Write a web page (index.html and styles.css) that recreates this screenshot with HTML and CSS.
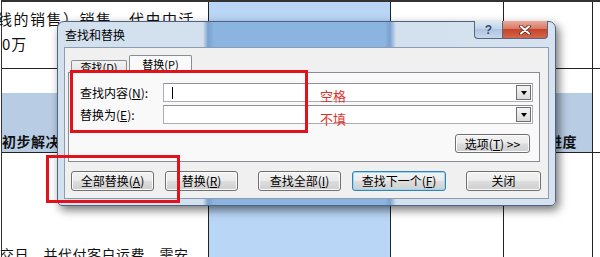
FILE: index.html
```html
<!DOCTYPE html>
<html lang="zh-CN">
<head>
    <meta charset="UTF-8">
    <title>查找和替换</title>
    <link rel="stylesheet" href="styles.css">
</head>
<body>

<div class="sheet">
    <div class="cell a1">
        <p class="line1">线的销售）销售，代由中活</p>
        <p class="line2">0万</p>
    </div>
    <div class="cell sel"></div>
    <div class="cell"></div>
    <div class="cell"></div>
    <div class="cell last"></div>

    <div class="cell flat"></div>
    <div class="cell flat sel"></div>
    <div class="cell flat"></div>
    <div class="cell flat"></div>
    <div class="cell flat last"></div>

    <div class="cell head"><b>初步解决</b></div>
    <div class="cell head sel"></div>
    <div class="cell head"></div>
    <div class="cell head right-txt"><b>进度</b></div>
    <div class="cell last"></div>

    <div class="cell foot"><p>交日，并代付客户运费，需安</p></div>
    <div class="cell foot sel"></div>
    <div class="cell foot"></div>
    <div class="cell foot"></div>
    <div class="cell foot last"></div>
</div>

<div class="dlg">
    <div class="titlebar">
        <span class="title">查找和替换</span>
        <div class="caps">
            <div class="cap help">?</div>
            <div class="cap close">
                <svg width="12" height="10" viewBox="0 0 12 10">
                    <path d="M2 1.5 L10 8.5 M10 1.5 L2 8.5" stroke="#5a1a10" stroke-width="3.6" stroke-linecap="round"/>
                    <path d="M2 1.5 L10 8.5 M10 1.5 L2 8.5" stroke="#fff" stroke-width="2.2" stroke-linecap="round"/>
                </svg>
            </div>
        </div>
    </div>

    <div class="client">
        <div class="tabs">
            <div class="tab">查找(<u>D</u>)</div>
            <div class="tab on">替换(<u>P</u>)</div>
        </div>
        <div class="pane">
            <div class="row">
                <label>查找内容(<u>N</u>):</label>
                <div class="combo"><span class="caret"></span><span class="drop"></span></div>
            </div>
            <div class="row">
                <label>替换为(<u>E</u>):</label>
                <div class="combo"><span class="drop"></span></div>
            </div>
            <div class="opt-row">
                <button class="btn opt">选项(<u>T</u>) &gt;&gt;</button>
            </div>
        </div>
        <div class="btn-row">
            <button class="btn w83">全部替换(<u>A</u>)</button>
            <button class="btn w73 g11">替换(<u>R</u>)</button>
            <button class="btn w83 g20">查找全部(<u>I</u>)</button>
            <button class="btn w94 g11 focus">查找下一个(<u>F</u>)</button>
            <button class="btn w75 g20">关闭</button>
        </div>
    </div>
</div>

<div class="mark mark-input"></div>
<div class="mark mark-btn"></div>
<div class="note note1">空格</div>
<div class="note note2">不填</div>

</body>
</html>
```

FILE: styles.css
```css
body {
    margin: 0;
    width: 600px;
    height: 257px;
    overflow: hidden;
    position: relative;
    background: #fff;
    font-family: "Noto Sans CJK SC", "Liberation Sans", sans-serif;
    color: #111;
}

/* spreadsheet behind the dialog */
.sheet {
    display: grid;
    grid-template-columns: 207px 182px 113px 89px 1fr;
    grid-template-rows: 67px 24px 60px 1fr;
    height: 257px;
    margin-left: 1px;
    border-top: 2px solid #333;
    border-left: 1px solid #333;
    box-sizing: border-box;
}

.cell {
    border-right: 1px solid #222;
    border-bottom: 1px solid #222;
    box-sizing: border-box;
    min-width: 0;
    font-size: 14px;
    line-height: 16px;
    white-space: nowrap;
}
.cell p {
    margin: 0;
}
.cell.last {
    border-right: none;
}
.cell.flat {
    border-bottom: none;
}
.cell.foot {
    border-bottom: none;
}
.sel {
    background: #b9d6f6;
}
.head {
    background: #b8cce4;
    padding-top: 40px;
    letter-spacing: 0.5px;
}
.head.sel {
    background: #9fb9dc;
}
.right-txt {
    padding-left: 44px;
}

.a1 {
    padding-top: 4px;
    font-size: 15px;
    line-height: 25px;
}
.line1 {
    margin-left: -5px !important;
    letter-spacing: 1.5px;
}
.line2 {
    letter-spacing: 1px;
}

.foot p {
    padding-top: 93px;
    margin-left: -2px;
    letter-spacing: 0.5px;
}

/* dialog window */
.dlg {
    position: absolute;
    left: 57px;
    top: 21px;
    width: 499px;
    height: 185px;
    box-sizing: border-box;
    border: 1px solid #4d6482;
    border-radius: 7px 7px 5px 5px;
    padding: 0 6px 6px;
    display: flex;
    flex-direction: column;
    background: linear-gradient(90deg, #d3e0ee 0, #d3e0ee 145px, #7aa1ce 150px, #8cb4e1 156px, #8cb4e1 327px, #7aa1ce 332px, #d3e0ee 338px, #d6e2f0 100%);
    box-shadow: 3px 4px 10px rgba(0, 0, 0, 0.55);
    font-size: 12px;
    color: #000;
}

.titlebar {
    height: 25px;
    display: flex;
    align-items: flex-start;
}
.title {
    line-height: 25px;
    margin-left: 1px;
    font-size: 12px;
}
.caps {
    margin-left: auto;
    margin-top: -1px;
    margin-right: 1px;
    display: flex;
}
.cap {
    height: 18px;
    box-sizing: border-box;
    border: 1px solid #58677c;
    border-top: none;
    display: flex;
    align-items: center;
    justify-content: center;
}
.help {
    width: 28px;
    border-right: none;
    border-radius: 0 0 0 4px;
    background: linear-gradient(#dde8f4, #c2d4ea 45%, #aec4df 50%, #c6d8ee);
    color: #3d4f66;
    font-weight: bold;
    font-size: 12px;
    font-family: "Liberation Sans", sans-serif;
}
.close {
    width: 46px;
    border-radius: 0 0 4px 0;
    background: linear-gradient(#e9aa9b, #d87a64 45%, #c7432a 50%, #d2674c);
}

.client {
    flex: 1;
    background: #f0f0f0;
    border: 1px solid #8b9cb3;
    display: flex;
    flex-direction: column;
}

.tabs {
    height: 24px;
    display: flex;
    align-items: flex-end;
    padding-left: 6px;
}
.tab {
    height: 13px;
    width: 56px;
    box-sizing: border-box;
    border: 1px solid #898c95;
    border-bottom: none;
    border-radius: 2px 2px 0 0;
    background: linear-gradient(#f2f2f2, #e3e3e3);
    font-size: 11px;
    line-height: 12px;
    text-align: center;
    margin-bottom: -1px;
}
.tab.on {
    width: 63px;
    height: 18px;
    margin-left: 2px;
    background: #fafafa;
    line-height: 17px;
    position: relative;
}

.pane {
    margin: 0 8px 0 3px;
    height: 90px;
    box-sizing: border-box;
    border: 1px solid #898c95;
    background: #f9f9f9;
    padding: 10px 6px 0 11px;
    display: flex;
    flex-direction: column;
    gap: 3px;
}
.row {
    display: flex;
    align-items: center;
}
.row label {
    width: 83px;
    font-size: 12px;
}
.combo {
    flex: 1;
    height: 19px;
    box-sizing: border-box;
    border: 1px solid #abadb3;
    border-top-color: #8e9096;
    background: #fff;
    display: flex;
    align-items: center;
    justify-content: space-between;
    padding: 0 1px 0 8px;
}
.caret {
    width: 1px;
    height: 12px;
    background: #000;
}
.drop {
    margin-left: auto;
    width: 15px;
    height: 15px;
    box-sizing: border-box;
    border: 1px solid #6f6f6f;
    background: linear-gradient(#f4f4f4, #dadada);
    display: flex;
    align-items: center;
    justify-content: center;
}
.drop::after {
    content: "";
    border-left: 3.5px solid transparent;
    border-right: 3.5px solid transparent;
    border-top: 4px solid #000;
    margin-top: 1px;
}

.opt-row {
    display: flex;
    justify-content: flex-end;
    margin-top: 7px;
    padding-right: 3px;
}

.btn {
    height: 20px;
    box-sizing: border-box;
    border: 1px solid #707070;
    border-radius: 3px;
    background: linear-gradient(#f3f3f3, #ebebeb 48%, #dddddd 52%, #cfcfcf);
    box-shadow: inset 0 0 0 1px #fbfbfb;
    font-family: "Noto Sans CJK SC", sans-serif;
    font-size: 12px;
    line-height: 16px;
    padding: 0;
    color: #000;
}
.btn.opt {
    width: 75px;
    height: 19px;
}
.btn.focus {
    border-color: #3c7fb1;
    box-shadow: inset 0 0 0 1px #8fdaf6;
}

.btn-row {
    display: flex;
    margin-top: 9px;
    padding-left: 6px;
}
.w73 { width: 73px; }
.w75 { width: 75px; }
.w83 { width: 83px; }
.w94 { width: 94px; }
.g11 { margin-left: 11px; }
.g20 { margin-left: 20px; }

/* red annotations drawn over the screenshot */
.mark {
    position: absolute;
    border: 3px solid #e3121a;
    box-sizing: border-box;
}
.mark-input {
    left: 70px;
    top: 70px;
    width: 238px;
    height: 63px;
}
.mark-btn {
    left: 46px;
    top: 155px;
    width: 134px;
    height: 48px;
}
.note {
    position: absolute;
    left: 320px;
    color: #e2322c;
    font-size: 13px;
    line-height: 14px;
}
.note1 {
    top: 89px;
}
.note2 {
    top: 112px;
}
```
